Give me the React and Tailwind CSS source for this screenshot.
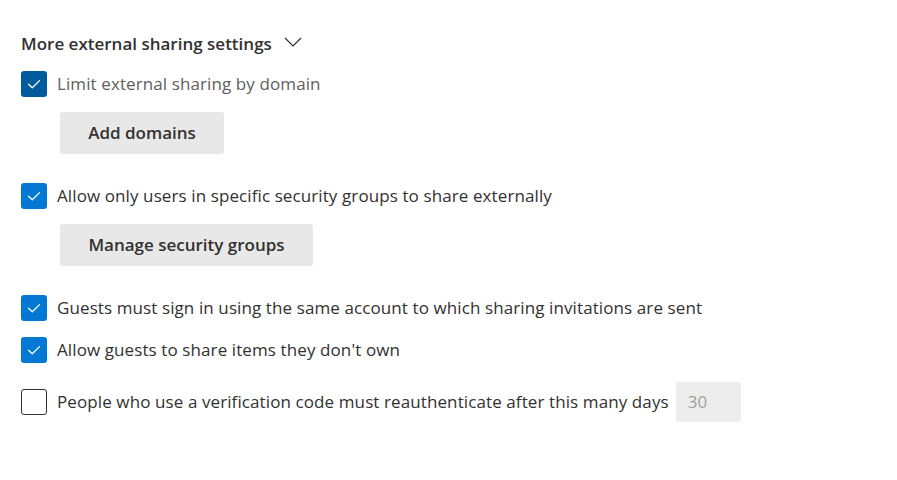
import React from "react";

const font = { fontFamily: '"Open Sans", "Noto Sans", sans-serif' };

function Check({ checked, dark }) {
  if (!checked) {
    return <div className="w-[26px] h-[26px] shrink-0 rounded-[3px] border border-[#323130] bg-white" />;
  }
  return (
    <div className={`w-[26px] h-[26px] shrink-0 rounded-[3px] flex items-center justify-center ${dark ? "bg-[#005a9e]" : "bg-[#0078d4]"}`}>
      <svg width="16" height="16" viewBox="0 0 16 16" fill="none">
        <path d="M2.5 8.2 L6.3 11.8 L13.5 4.6" stroke="white" strokeWidth="1.3" strokeLinecap="round" strokeLinejoin="round" />
      </svg>
    </div>
  );
}

function Row({ checked, dark, children, gray, className = "" }) {
  return (
    <div className={`flex items-center gap-[10px] ${className}`}>
      <Check checked={checked} dark={dark} />
      <span className={`text-[17px] leading-[22px] tracking-[0.1px] ${gray ? "text-[#605e5c]" : "text-[#323130]"}`}>{children}</span>
    </div>
  );
}

function Btn({ children, w }) {
  return (
    <button className={`ml-[39px] h-[42px] ${w} rounded-[3px] bg-[#e8e8e8] text-[17px] font-semibold text-[#323130] flex items-center justify-center`}>
      {children}
    </button>
  );
}

export default function App() {
  return (
    <div className="w-[897px] h-[480px] bg-white pl-[21px] pt-[32px]" style={font}>
      <div className="flex items-center h-[24px]">
        <span className="text-[17px] font-semibold text-[#323130]">More external sharing settings</span>
        <svg className="ml-[12px] -mt-[4px]" width="18" height="10" viewBox="0 0 18 10" fill="none">
          <path d="M1 1 L9 9 L17 1" stroke="#323130" strokeWidth="1.2" />
        </svg>
      </div>
      <Row checked dark gray className="mt-[15px]">Limit external sharing by domain</Row>
      <div className="mt-[15px]"><Btn w="w-[164px]">Add domains</Btn></div>
      <Row checked className="mt-[29px]">Allow only users in specific security groups to share externally</Row>
      <div className="mt-[15px]"><Btn w="w-[253px]">Manage security groups</Btn></div>
      <Row checked className="mt-[29px]">Guests must sign in using the same account to which sharing invitations are sent</Row>
      <Row checked className="mt-[16px]">Allow guests to share items they don't own</Row>
      <div className="flex items-center mt-[19px]">
        <Row checked={false}>People who use a verification code must reauthenticate after this many days</Row>
        <div className="ml-[7px] w-[65px] h-[40px] rounded-[2px] bg-[#ededed] text-[17px] text-[#a19f9d] flex items-center pl-[12px]">30</div>
      </div>
    </div>
  );
}
